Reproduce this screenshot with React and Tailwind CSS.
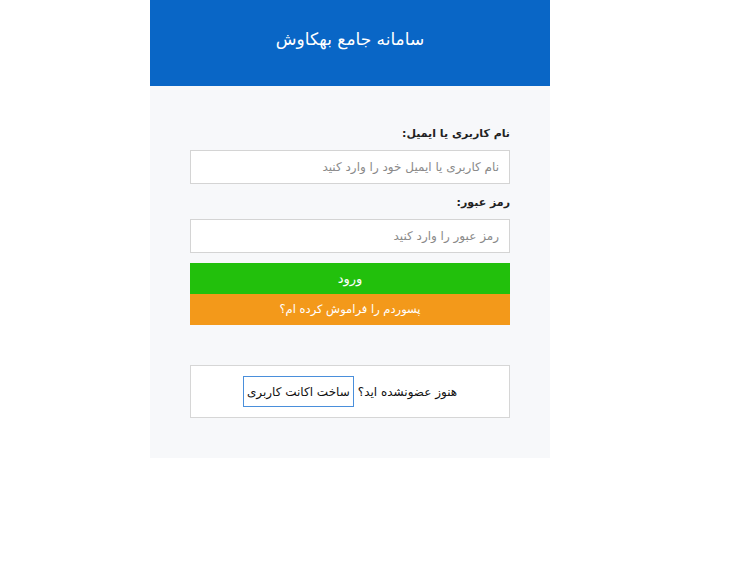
export default function App() {
  return (
    <div className="min-h-screen bg-white" style={{ fontFamily: '"DejaVu Sans", "Noto Sans", sans-serif' }}>
      <div dir="rtl" className="ml-[150px] w-[400px]">
        {/* Header */}
        <div className="h-[86px] bg-[#0966c6] flex items-center justify-center pb-[6px]">
          <h1 className="text-white text-[17px]">سامانه جامع بهکاوش</h1>
        </div>

        {/* Body */}
        <div className="bg-[#f7f8fa] p-10">
          <label className="block h-[18px] mb-[6px] text-[11px] font-bold text-[#222]">نام کاربری یا ایمیل:</label>
          <input
            type="text"
            placeholder="نام کاربری یا ایمیل خود را وارد کنید"
            className="block w-full h-[34px] px-[10px] bg-white border border-[#d4d4d4] text-[12px] placeholder-[#8a8a8a] outline-none"
          />

          <label className="block h-[18px] mt-[11px] mb-[6px] text-[11px] font-bold text-[#222]">رمز عبور:</label>
          <input
            type="password"
            placeholder="رمز عبور را وارد کنید"
            className="block w-full h-[34px] px-[10px] bg-white border border-[#d4d4d4] text-[12px] placeholder-[#8a8a8a] outline-none"
          />

          <button className="mt-[10px] block w-full h-[31px] bg-[#22c00c] text-white text-[13px]">ورود</button>
          <button className="block w-full h-[31px] bg-[#f3991a] text-white text-[11.5px]">پسوردم را فراموش کرده ام؟</button>

          <div className="mt-10 h-[53px] bg-white border border-[#d6d6d6] flex items-center justify-center gap-1">
            <span className="text-[12px] text-[#111]">هنوز عضونشده اید؟</span>
            <button className="h-[31px] w-[111px] border border-[#4a8fdb] bg-white text-[12px] text-[#111]">ساخت اکانت کاربری</button>
          </div>
        </div>
      </div>
    </div>
  )
}
